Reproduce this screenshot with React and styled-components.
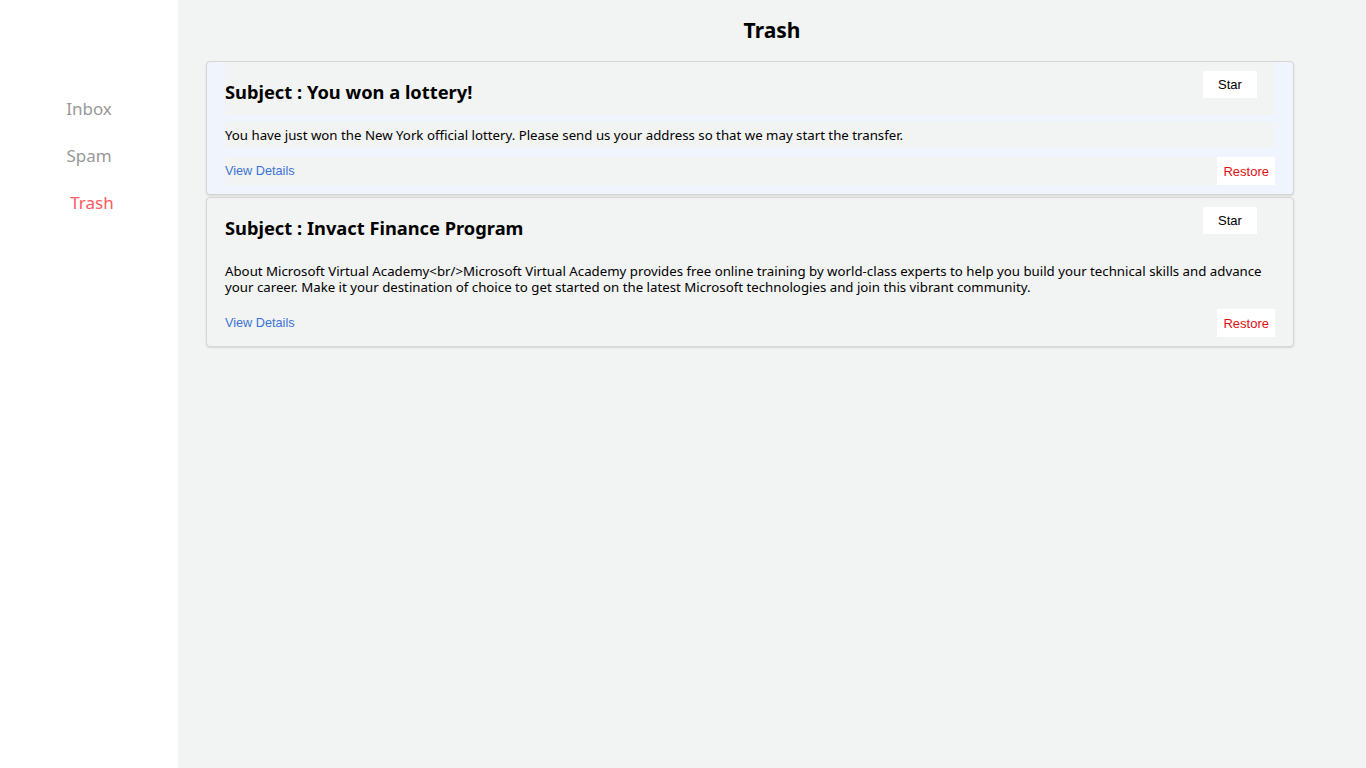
import styled, { createGlobalStyle } from 'styled-components'

const GlobalStyle = createGlobalStyle`
  html, body {
    margin: 0;
    padding: 0;
    background: #f2f3f3;
    font-family: "Noto Sans", "Open Sans", sans-serif;
  }
`

const Layout = styled.div`
  display: flex;
  min-height: 768px;
`

const Sidebar = styled.nav`
  width: 178px;
  flex-shrink: 0;
  background: #fff;
  padding-top: 97px;
  display: flex;
  flex-direction: column;
  align-items: center;
  gap: 23px;
`

const NavItem = styled.a`
  font-size: 17px;
  line-height: 24px;
  color: ${(p) => (p.active ? '#ff5a5f' : '#999')};
  text-decoration: none;
  cursor: pointer;
  padding-left: ${(p) => (p.active ? '6px' : '0')};
`

const Main = styled.main`
  flex: 1;
  padding: 16px 0 0 28px;
`

const Title = styled.h2`
  margin: 0 0 17px;
  text-align: center;
  font-size: 21px;
  line-height: 28px;
  font-weight: 700;
  color: #000;
  padding-right: 28px;
`

const List = styled.div`
  width: 1088px;
  display: flex;
  flex-direction: column;
  gap: 2px;
`

const Card = styled.div`
  background: ${(p) => (p.hover ? '#f0f4fc' : '#f2f3f3')};
  border: 1px solid #d6d6d6;
  border-radius: 4px;
  box-shadow: 0 1px 2px rgba(0, 0, 0, 0.12);
  padding: 0 18px 9px;
`

const Header = styled.div`
  background: #f2f3f3;
  display: flex;
  justify-content: space-between;
  align-items: flex-start;
  padding-bottom: 12px;
`

const Subject = styled.h3`
  margin: 19px 0 0;
  font-size: 18.3px;
  line-height: 22px;
  font-weight: 700;
  color: #000;
`

const Button = styled.button`
  font-family: "Liberation Sans", Arial, sans-serif;
  font-size: 13px;
  background: #fff;
  border: none;
  height: 27px;
  padding: 0 13px;
  color: ${(p) => p.color || '#000'};
  cursor: pointer;
`

const StarButton = styled(Button)`
  margin-top: 9px;
  margin-right: 18px;
  width: 54px;
`

const Body = styled.p`
  background: #f2f3f3;
  margin: 7px 0 9px;
  font-size: 13.25px;
  line-height: 16px;
  padding: 5px 0 5px;
  color: #000;
`

const Footer = styled.div`
  background: #f2f3f3;
  display: flex;
  justify-content: space-between;
  align-items: center;
`

const DetailsLink = styled.a`
  font-family: "Liberation Sans", Arial, sans-serif;
  font-size: 12.7px;
  color: #3b73d9;
  text-decoration: none;
  cursor: pointer;
`

const RestoreButton = styled(Button)`
  height: 28px;
  padding: 0 6px;
`

const mails = [
  {
    id: 1,
    subject: 'You won a lottery!',
    body: 'You have just won the New York official lottery. Please send us your address so that we may start the transfer.',
  },
  {
    id: 2,
    subject: 'Invact Finance Program',
    body: 'About Microsoft Virtual Academy<br/>Microsoft Virtual Academy provides free online training by world-class experts to help you build your technical skills and advance your career. Make it your destination of choice to get started on the latest Microsoft technologies and join this vibrant community.',
  },
]

export default function App() {
  return (
    <>
      <GlobalStyle />
      <Layout>
        <Sidebar>
          <NavItem>Inbox</NavItem>
          <NavItem>Spam</NavItem>
          <NavItem active>Trash</NavItem>
        </Sidebar>
        <Main>
          <Title>Trash</Title>
          <List>
            {mails.map((mail, i) => (
              <Card key={mail.id} hover={i === 0}>
                <Header>
                  <Subject>Subject : {mail.subject}</Subject>
                  <StarButton>Star</StarButton>
                </Header>
                <Body>{mail.body}</Body>
                <Footer>
                  <DetailsLink>View Details</DetailsLink>
                  <RestoreButton color="#e01010">Restore</RestoreButton>
                </Footer>
              </Card>
            ))}
          </List>
        </Main>
      </Layout>
    </>
  )
}
